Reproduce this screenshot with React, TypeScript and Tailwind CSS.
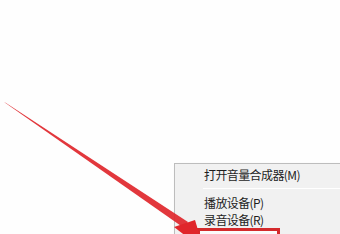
import React from 'react';

const items = ['打开音量合成器(M)', 'sep', '播放设备(P)', '录音设备(R)', '声音(S)'];

const Arrow: React.FC = () => (
  <svg className="absolute left-0 top-0 pointer-events-none" width="340" height="234" viewBox="0 0 340 234">
    <polygon points="4,102 6,103 188,222 184,228" fill="#e0262b" opacity="0.92" />
    <polygon points="174,227 195,220 204,250" fill="#e0262b" />
  </svg>
);

const App: React.FC = () => {
  return (
    <div className="relative w-[340px] h-[234px] overflow-hidden bg-[#fefefe] font-['Noto_Sans_CJK_SC',sans-serif]">
      <div
        className="absolute left-[174px] top-[163px] w-[200px] pt-[2px]
        bg-[#f1f1f1] border border-[#bdbdbd] shadow-[2px_2px_3px_rgba(0,0,0,0.15)]"
      >
        {items.map((item, i) =>
          item === 'sep' ? (
            <div key={i} className="h-[11px] flex items-center pl-[28px]">
              <div className="h-px w-full bg-[#d7d7d7] border-b border-white" />
            </div>
          ) : (
            <div
              key={i}
              className={
                i === 4
                  ? 'relative h-[17px] flex items-center ml-[22px] w-[83px] border-[3px] border-[#d42a2c] bg-[#fbfbfb]'
                  : 'h-[17px] flex items-center pl-[29px] text-[12px] text-[#1e1e1e] tracking-[-0.6px]'
              }
            >
              {i === 4 ? null : item}
            </div>
          )
        )}
      </div>
      <Arrow />
    </div>
  );
};

export default App;
